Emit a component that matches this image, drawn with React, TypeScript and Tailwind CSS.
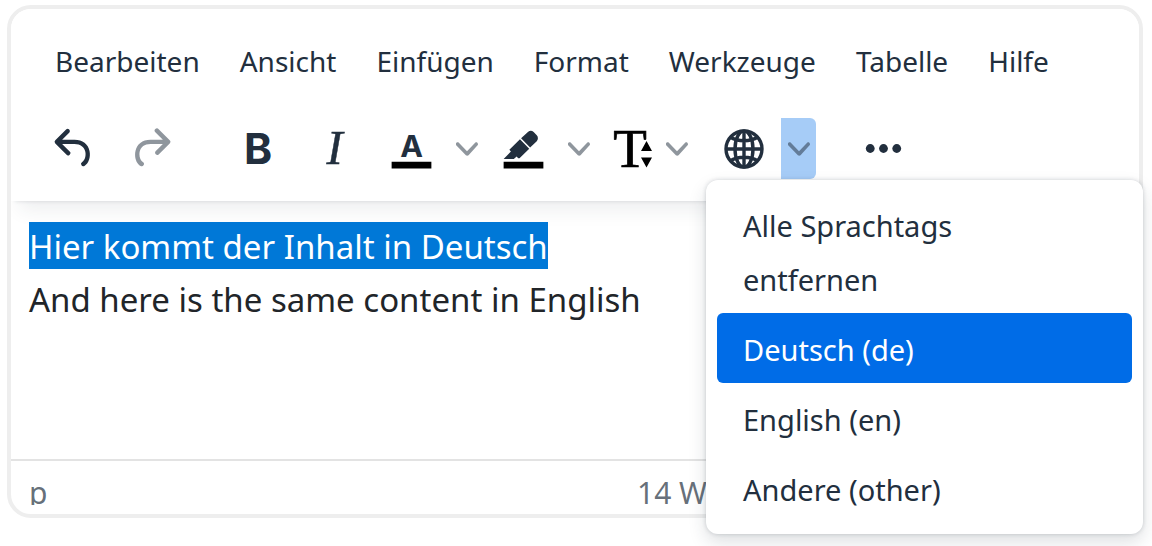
import type { ReactNode } from "react";

const menus = ["Bearbeiten", "Ansicht", "Einfügen", "Format", "Werkzeuge", "Tabelle", "Hilfe"];

const languages = [
  { label: "Alle Sprachtags entfernen", active: false },
  { label: "Deutsch (de)", active: true },
  { label: "English (en)", active: false },
  { label: "Andere (other)", active: false },
];

function Icon({ children }: { children: ReactNode }) {
  return (
    <svg viewBox="0 0 24 24" className="h-[53px] w-[53px] shrink-0" fill="currentColor" aria-hidden="true">
      {children}
    </svg>
  );
}

function ToolButton({ label, disabled, children }: { label: string; disabled?: boolean; children: ReactNode }) {
  return (
    <button
      type="button"
      aria-label={label}
      disabled={disabled}
      className="flex h-[61px] w-[75px] shrink-0 items-center justify-center disabled:opacity-50"
    >
      {children}
    </button>
  );
}

function Chevron({ label, open }: { label: string; open?: boolean }) {
  return (
    <button
      type="button"
      aria-label={label}
      aria-expanded={open ? true : false}
      className={`flex h-[61px] w-[35px] shrink-0 items-center justify-center ${open ? "rounded-r-md bg-[#a6ccf7]" : ""}`}
    >
      <svg viewBox="0 0 10 10" className="h-[22px] w-[22px] opacity-50" fill="currentColor" aria-hidden="true">
        <path d="M8.7 2.2c.3-.3.8-.3 1 0 .4.4.4.9 0 1.2L5.7 7.8c-.3.3-.9.3-1.2 0L.2 3.4a.8.8 0 0 1 0-1.2c.3-.3.8-.3 1.1 0L5 6l3.7-3.8Z" />
      </svg>
    </button>
  );
}

function Toolbar() {
  return (
    <div role="toolbar" className="flex items-center pl-[26px]">
      <div className="mr-8 flex gap-px">
        <ToolButton label="Rückgängig">
          <Icon>
            <path d="M6.4 8H12c3.7 0 6.2 2 6.8 5.1.6 2.7-.4 5.6-2.3 6.8a1 1 0 0 1-1-1.8c1.1-.6 1.8-2.7 1.4-4.6-.5-2.1-2.1-3.5-4.9-3.5H6.4l3.3 3.3a1 1 0 1 1-1.4 1.4l-5-5a1 1 0 0 1 0-1.4l5-5a1 1 0 0 1 1.4 1.4L6.4 8Z" />
          </Icon>
        </ToolButton>
        <ToolButton label="Wiederholen" disabled>
          <Icon>
            <path d="M17.6 10H12c-2.8 0-4.4 1.4-4.9 3.5-.4 2 .3 4 1.4 4.6a1 1 0 1 1-1 1.8c-2-1.2-2.9-4.1-2.3-6.8.6-3 3-5.1 6.8-5.1h5.6l-3.3-3.3a1 1 0 1 1 1.4-1.4l5 5a1 1 0 0 1 0 1.4l-5 5a1 1 0 0 1-1.4-1.4l3.3-3.3Z" />
          </Icon>
        </ToolButton>
      </div>

      <div className="mr-3 flex gap-0.5">
        <ToolButton label="Fett">
          <Icon>
            <text x="12.3" y="19" fontSize="19.3" fontWeight="700" textAnchor="middle" className="font-['Inter',sans-serif]">B</text>
          </Icon>
        </ToolButton>
        <ToolButton label="Kursiv">
          <Icon>
            <text x="12" y="19" fontSize="22" fontStyle="italic" textAnchor="middle" stroke="currentColor" strokeWidth=".2" className="font-['Liberation_Serif',serif]">I</text>
          </Icon>
        </ToolButton>
        <div className="flex">
          <ToolButton label="Textfarbe">
            <Icon>
              <path d="M3 18h18v3H3z" fill="#000" />
              <text x="12" y="16" fontSize="13.8" fontWeight="700" textAnchor="middle" className="font-['Inter',sans-serif]">A</text>
            </Icon>
          </ToolButton>
          <Chevron label="Textfarbe auswählen" />
        </div>
        <div className="flex">
          <ToolButton label="Hintergrundfarbe">
            <Icon>
              <path d="M3 18h18v3H3z" fill="#000" />
              <path d="M7.7 16.7H3l3.3-3.3-.7-.8L10.4 7.800l4.200 4.300-4.300 4.200c-.2.2-.6.2-.8 0l-.6-.7-1.300 1.100Zm3.200-9.300L14 4.500a2 2 0 0 1 2.600 0L18 6c.7.7.7 2 0 2.700l-3 2.900Z" />
            </Icon>
          </ToolButton>
          <Chevron label="Hintergrundfarbe auswählen" />
        </div>
        <div className="flex">
          <button type="button" aria-label="Schriftgröße" className="flex h-[61px] w-[61px] items-center justify-end pr-1.5 text-black">
            <svg viewBox="0 0 40 40" className="h-10 w-10 overflow-visible" fill="currentColor" aria-hidden="true">
              <text x="17" y="38" fontSize="55" textAnchor="middle" stroke="currentColor" strokeWidth=".7" className="font-['Liberation_Serif',serif]">T</text>
              {/* size arrows, cut out of the letter's right arm */}
              <path d="M33.500 12l5.500 10h-11zM33.500 38.500l5.500-10h-11z" stroke="#fff" strokeWidth="2" paintOrder="stroke" />
            </svg>
          </button>
          <Chevron label="Schriftgröße auswählen" />
        </div>
      </div>

      <div className="mr-[30px] flex">
        <ToolButton label="Sprache">
          <svg viewBox="0 0 40 40" className="h-10 w-10" fill="none" stroke="currentColor" strokeWidth="3.4" aria-hidden="true">
            <circle cx="20" cy="20" r="18" />
            <ellipse cx="20" cy="20" rx="9" ry="18" />
            <path d="M20 2v36M2 20h36M6 8c8 5 20 5 28 0M6 32c8-5 20-5 28 0" />
          </svg>
        </ToolButton>
        <Chevron label="Sprache auswählen" open />
      </div>

      <ToolButton label="Mehr">
        <Icon>
          <circle cx="6" cy="12" r="2" />
          <circle cx="12" cy="12" r="2" />
          <circle cx="18" cy="12" r="2" />
        </Icon>
      </ToolButton>
    </div>
  );
}

function LanguageMenu() {
  return (
    <div
      role="menu"
      className="absolute top-[175px] right-0 z-20 w-[437px] rounded-xl bg-white px-[11px] pt-[9px] pb-[11px] shadow-[0_0_4px_rgba(34,47,62,0.2),0_8px_18px_rgba(34,47,62,0.15)]"
    >
      {languages.map((item) => (
        <button
          key={item.label}
          type="button"
          role="menuitem"
          className={`block w-full rounded-md pt-2.5 pr-24 pb-1.5 pl-[26px] text-left text-[29px] leading-[54px] ${item.active ? "bg-[#006ce7] text-white" : ""}`}
        >
          {item.label}
        </button>
      ))}
    </div>
  );
}

export default function App() {
  return (
    <div className="bg-white pt-[5px] pr-[9px] pb-7 pl-[7px] font-['Noto_Sans','Open_Sans',sans-serif] text-[#222f3e]">
      <div className="relative">
        <div className="overflow-hidden rounded-3xl border-4 border-[#eee] bg-white">
          {/* Header */}
          <header className="relative z-10 bg-white pb-[22px] shadow-[0_4px_4px_-4px_rgba(34,47,62,0.15),0_18px_18px_-9px_rgba(34,47,62,0.08)]">
            <nav className="flex gap-10 pt-8 pb-[37px] pl-11 text-[28px] leading-10">
              {menus.map((name) => (
                <button key={name} type="button">{name}</button>
              ))}
            </nav>
            <Toolbar />
          </header>

          {/* Content */}
          <div
            contentEditable
            suppressContentEditableWarning
            role="textbox"
            aria-label="Inhalt"
            className="h-[258px] px-[18px] pt-[19px] text-[33px] leading-[53px] text-[#212529] outline-none"
          >
            <p><span className="bg-[#0078d7] pt-0.5 text-white">Hier kommt der Inhalt in Deutsch</span></p>
            <p>And here is the same content in English</p>
          </div>

          {/* Status bar */}
          <footer className="border-t-2 border-[#e3e3e3] px-[18px] pt-3 pb-[9px] text-[30px] leading-10 text-[#222f3e]/70">
            <div className="flex h-8 overflow-hidden">
              <span className="w-[608px]">p</span>
              <span className="whitespace-nowrap">14 Wörter</span>
            </div>
          </footer>
        </div>

        <LanguageMenu />
      </div>
    </div>
  );
}
